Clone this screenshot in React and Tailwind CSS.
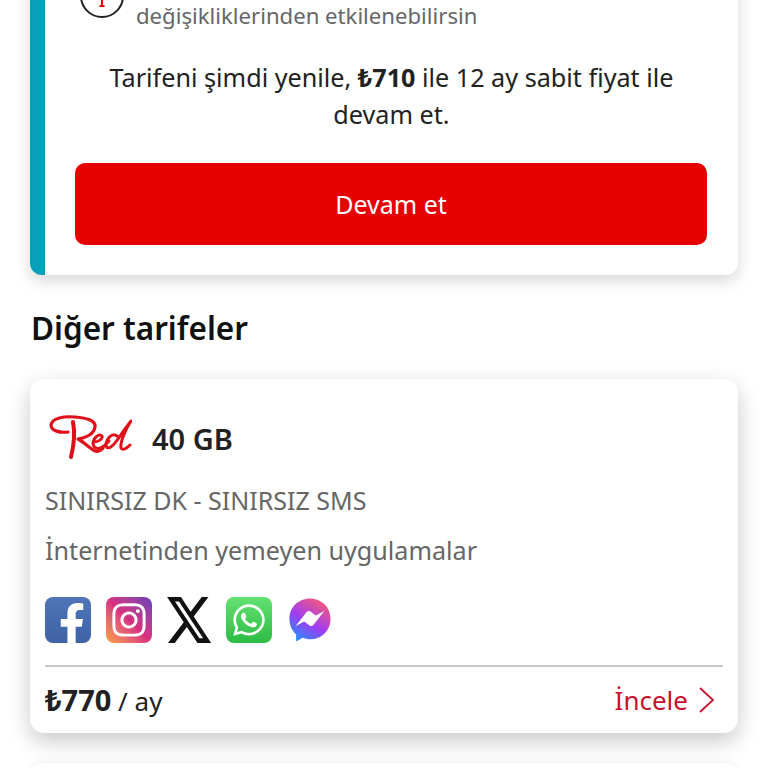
import React from "react";
import { FaFacebookF, FaInstagram, FaWhatsapp } from "react-icons/fa";

const font = { fontFamily: '"Noto Sans", sans-serif' };

function RedLogo() {
  return (
    <svg width="84" height="48" viewBox="0 0 84 48" fill="none" stroke="#e0101a" strokeLinecap="round" strokeLinejoin="round" className="shrink-0">
      <path d="M20 17C12 18 3 16 3 10C4 3 16 1 27 2C38 3 48 5 47 12C46 19 38 23 30 24C36 27 41 33 47 36C50 37 52 36 55 33" strokeWidth="3.200" />
      <path d="M25 7C27 17 26 30 23 42" strokeWidth="4" />
      <path d="M46 27C50 27 55 24 54 21C51 18 45 23 45 29C46 34 51 35 56 31L61 26" strokeWidth="3" />
      <path d="M69 21C64 17 58 24 58 31C60 36 66 30 70 24C74 18 79 11 83 6C78 13 72 27 73 33C75 36 79 33 82 30" strokeWidth="3" />
    </svg>
  );
}

function AppIcons() {
  return (
    <div className="flex items-center gap-[15px] mt-[30px]">
      <div className="w-[46px] h-[46px] rounded-[8px] bg-gradient-to-b from-[#4f74b8] to-[#3f62a6] overflow-hidden flex items-end justify-center">
        <FaFacebookF className="text-white w-[40px] h-[42px] translate-x-[4px] translate-y-[2px]" />
      </div>
      <div className="w-[46px] h-[46px] rounded-[8px] bg-gradient-to-tr from-[#f9a03a] via-[#d92e7f] to-[#6a3ab8] flex items-center justify-center">
        <FaInstagram className="text-white w-[38px] h-[38px]" />
      </div>
      <svg width="44" height="46" viewBox="1.2 2.2 21.600 19.600" preserveAspectRatio="none" fill="#111" className="shrink-0">
        <path d="M18.244 2.25h3.308l-7.227 8.26 8.502 11.24H16.170l-5.214-6.817L4.990 21.750H1.680l7.730-8.835L1.254 2.250H8.080l4.713 6.231zm-1.161 17.520h1.833L7.084 4.126H5.117z" />
      </svg>
      <div className="w-[46px] h-[46px] rounded-[8px] bg-gradient-to-b from-[#62e272] to-[#2bbb44] flex items-center justify-center">
        <FaWhatsapp className="text-white w-[36px] h-[36px]" />
      </div>
      <svg width="44" height="46" viewBox="0 0 46 46" preserveAspectRatio="none" className="ml-[1px] shrink-0">
        <defs>
          <linearGradient id="msg" x1="0.2" y1="1" x2="0.8" y2="0">
            <stop offset="0" stopColor="#1f8fff" />
            <stop offset="0.45" stopColor="#a13cf0" />
            <stop offset="1" stopColor="#fb5c74" />
          </linearGradient>
        </defs>
        <path d="M23 1.500C11 1.500 1.500 10.300 1.500 22C1.500 28.300 4.200 33.700 8.500 37.400V44.500L15.200 40.800C17.600 41.700 20.200 42.300 23 42.300C35 42.300 44.500 33.500 44.500 22C44.500 10.300 35 1.500 23 1.500Z" fill="url(#msg)" />
        <path d="M8 29L19.500 15C20.500 13.800 22.200 13.600 23.500 14.500L29 18.500L38 14L26.500 28C25.500 29.200 23.800 29.400 22.500 28.500L17 24.500Z" fill="#fff" />
      </svg>
    </div>
  );
}

export default function App() {
  return (
    <div className="w-[768px] h-[768px] overflow-hidden bg-white" style={font}>
      <div className="px-[30px]">
        <div className="-mt-[40px] h-[315px] rounded-[12px] bg-white border-l-[15px] border-[#0a9fba] shadow-[0_6px_16px_rgba(0,0,0,0.16)] overflow-hidden">
          <div className="flex pl-[35px] pr-[30px] gap-[12px]">
            <svg width="44" height="44" viewBox="0 0 44 44" fill="none" className="mt-[14px] shrink-0">
              <circle cx="22" cy="22" r="21" stroke="#222" strokeWidth="2" />
              <path d="M22 10V32M19.500 32H24.500" stroke="#e60000" strokeWidth="2" />
            </svg>
            <p className="mt-[39px] text-[22.150px] leading-[32px] text-[#666] whitespace-nowrap">
              değişikliklerinden etkilenebilirsin
            </p>
          </div>
          <p className="mt-[28px] px-[40px] text-center text-[25.200px] leading-[37px] text-[#222]">
            Tarifeni şimdi yenile, <b className="font-bold">₺710</b> ile 12 ay sabit fiyat ile<br />devam et.
          </p>
          <div className="mt-[30px] ml-[30px] mr-[31px] h-[82px] pt-[1px] rounded-[10px] bg-[#e60000] flex items-center justify-center text-white text-[25px]">
            Devam et
          </div>
        </div>

        <h2 className="mt-[31px] mb-[29px] pl-[1px] text-[31.500px] leading-[44px] font-semibold text-[#111]">Diğer tarifeler</h2>

        <div className="h-[354px] rounded-[14px] bg-white shadow-[0_8px_22px_rgba(0,0,0,0.22)] px-[15px] pt-[36px]">
          <div className="flex items-center gap-[20px] pl-[3px] h-[48px]">
            <RedLogo />
            <span className="text-[29px] font-semibold text-[#222]">40 GB</span>
          </div>
          <div className="mt-[20px] text-[25px] leading-[34px] text-[#666]">SINIRSIZ DK - SINIRSIZ SMS</div>
          <div className="mt-[16px] text-[25.150px] leading-[34px] text-[#666]">İnternetinden yemeyen uygulamalar</div>
          <AppIcons />
          <div className="mt-[22px] border-t-2 border-[#c8c8c8] flex items-center justify-between h-[68px]">
            <div className="text-[#222] text-[26px]"><b className="font-bold text-[29px]">₺770</b> / ay</div>
            <div className="flex items-center gap-[10px] text-[#c8102e] text-[26px] pr-[7px]">
              İncele
              <svg width="18" height="28" viewBox="0 0 18 28" fill="none" stroke="#c8102e" strokeWidth="1.800"><path d="M2 2L15 14L2 26" /></svg>
            </div>
          </div>
        </div>

        <div className="mt-[30px] h-[100px] rounded-[14px] bg-white shadow-[0_0_12px_rgba(0,0,0,0.08)]" />
      </div>
    </div>
  );
}
